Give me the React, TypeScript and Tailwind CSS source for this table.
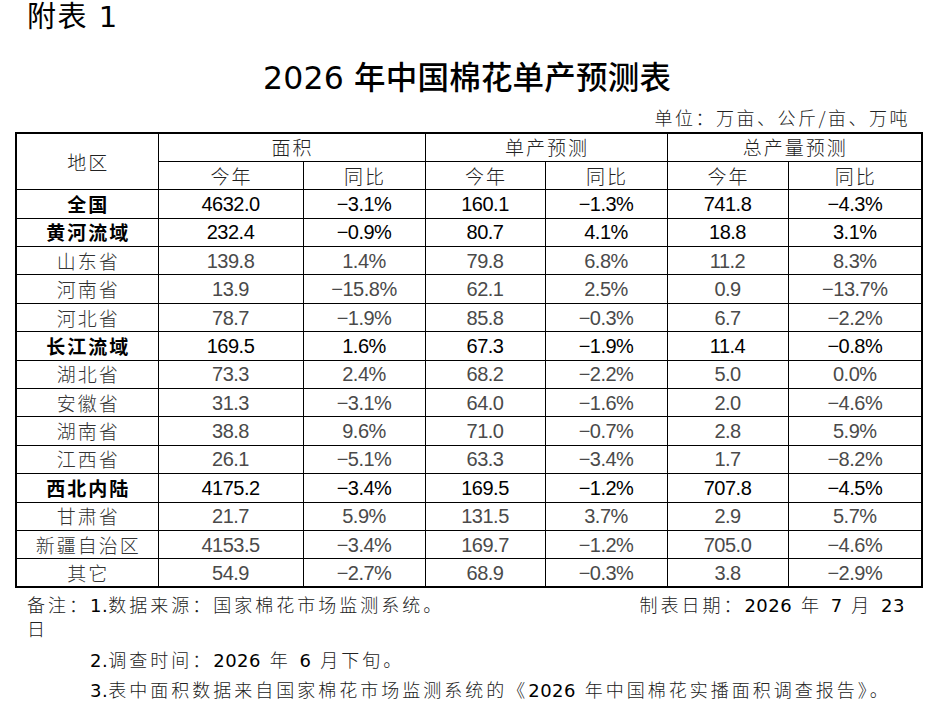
import React from "react";

const cjk = "font-['Noto_Sans_CJK_SC',sans-serif]";
const mixed = "font-['DejaVu_Sans','Noto_Sans_CJK_SC',sans-serif]";
const num = "font-['Liberation_Sans','Noto_Sans_CJK_SC',sans-serif]";

type Row = { name: string; bold?: boolean; v: string[] };

// 数据按地区排列，粗体为流域合计
const rows: Row[] = [
  { name: "全国", bold: true, v: ["4632.0", "−3.1%", "160.1", "−1.3%", "741.8", "−4.3%"] },
  { name: "黄河流域", bold: true, v: ["232.4", "−0.9%", "80.7", "4.1%", "18.8", "3.1%"] },
  { name: "山东省", v: ["139.8", "1.4%", "79.8", "6.8%", "11.2", "8.3%"] },
  { name: "河南省", v: ["13.9", "−15.8%", "62.1", "2.5%", "0.9", "−13.7%"] },
  { name: "河北省", v: ["78.7", "−1.9%", "85.8", "−0.3%", "6.7", "−2.2%"] },
  { name: "长江流域", bold: true, v: ["169.5", "1.6%", "67.3", "−1.9%", "11.4", "−0.8%"] },
  { name: "湖北省", v: ["73.3", "2.4%", "68.2", "−2.2%", "5.0", "0.0%"] },
  { name: "安徽省", v: ["31.3", "−3.1%", "64.0", "−1.6%", "2.0", "−4.6%"] },
  { name: "湖南省", v: ["38.8", "9.6%", "71.0", "−0.7%", "2.8", "5.9%"] },
  { name: "江西省", v: ["26.1", "−5.1%", "63.3", "−3.4%", "1.7", "−8.2%"] },
  { name: "西北内陆", bold: true, v: ["4175.2", "−3.4%", "169.5", "−1.2%", "707.8", "−4.5%"] },
  { name: "甘肃省", v: ["21.7", "5.9%", "131.5", "3.7%", "2.9", "5.7%"] },
  { name: "新疆自治区", v: ["4153.5", "−3.4%", "169.7", "−1.2%", "705.0", "−4.6%"] },
  { name: "其它", v: ["54.9", "−2.7%", "68.9", "−0.3%", "3.8", "−2.9%"] },
];

const groups = ["面积", "单产预测", "总产量预测"];

// 数字不加字距
const N = ({ children }: { children: React.ReactNode }) => (
  <span className="tracking-[0.5px] text-black font-normal">{children}</span>
);

const cell = "border border-black p-0 text-center align-middle h-[28.4px] leading-[20px]";

export default function App() {
  return (
    <div className="w-[946px] h-[714px] bg-white text-black overflow-hidden">
      <div className={`${mixed} h-[34px] leading-[34px] text-[29px] pl-[27px] tracking-[1.5px]`}>附表 1</div>

      <div className={`${mixed} mt-[26px] h-[36px] leading-[36px] text-[31.5px] text-center font-medium pr-[12px] tracking-[0.2px]`}>
        2026 年中国棉花单产预测表
      </div>

      <div className={`${cjk} mt-[9px] h-[24px] leading-[24px] text-[18px] font-light tracking-[2.5px] text-right pr-[36px] text-[#222]`}>
        单位：万亩、公斤/亩、万吨
      </div>

      <table className="mt-[3px] ml-[15px] w-[906px] table-fixed border-collapse border-2 border-black">
        <colgroup>
          <col className="w-[142px]" />
          <col className="w-[145px]" />
          <col className="w-[122px]" />
          <col className="w-[120px]" />
          <col className="w-[122px]" />
          <col className="w-[121px]" />
          <col className="w-[134px]" />
        </colgroup>
        <thead className={`${cjk} text-[19px] font-light tracking-[2px] text-[#222]`}>
          <tr>
            <th rowSpan={2} className={`${cell} font-light pl-[2px]`}>地区</th>
            {groups.map((g) => (
              <th key={g} colSpan={2} className={`${cell} font-light pl-[2px]`}>{g}</th>
            ))}
          </tr>
          <tr>
            {groups.map((g) => (
              <React.Fragment key={g}>
                <th className={`${cell} font-light pl-[2px]`}>今年</th>
                <th className={`${cell} font-light pl-[2px]`}>同比</th>
              </React.Fragment>
            ))}
          </tr>
        </thead>
        <tbody>
          {rows.map((r) => (
            <tr key={r.name}>
              <td
                className={`${cell} ${cjk} text-[19px] tracking-[2px] pl-[2px] ${
                  r.bold ? "font-semibold text-black" : "font-light text-[#333]"
                }`}
              >
                {r.name}
              </td>
              {r.v.map((x, i) => (
                <td
                  key={i}
                  className={`${cell} ${num} text-[20px] tracking-[-0.5px] ${
                    r.bold ? "text-black" : "text-[#4a4a4a]"
                  }`}
                >
                  {x}
                </td>
              ))}
            </tr>
          ))}
        </tbody>
      </table>

      <div className={`${mixed} text-[18px] tracking-[3px] font-light text-[#222]`}>
        <div className="mt-[6px] h-[24px] leading-[24px] pl-[27px] pr-[41px] flex justify-between">
          <span>
            备注：<N>1.</N>数据来源：国家棉花市场监测系统。
          </span>
          <span>
            制表日期：<N>2026</N> 年 <N>7</N> 月 <N>23</N>
          </span>
        </div>
        <div className="h-[24px] leading-[24px] pl-[27px]">日</div>
        <div className="mt-[7px] h-[24px] leading-[24px] pl-[90px]">
          <N>2.</N>调查时间：<N>2026</N> 年 <N>6</N> 月下旬。
        </div>
        <div className="mt-[6px] h-[24px] leading-[24px] pl-[90px] whitespace-nowrap">
          <N>3.</N>表中面积数据来自国家棉花市场监测系统的《<N>2026</N> 年中国棉花实播面积调查报告》。
        </div>
      </div>
    </div>
  );
}
